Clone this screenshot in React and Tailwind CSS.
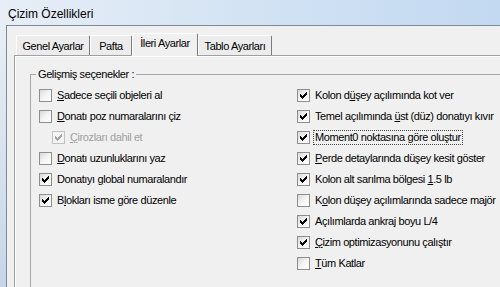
import React from "react";

const leftItems = [
  { u: "S", post: "adece seçili objeleri al", checked: false },
  { u: "D", post: "onatı poz numaralarını çiz", checked: false },
  { u: "Ç", post: "irozları dahil et", checked: true, disabled: true, indent: true },
  { u: "D", post: "onatı uzunluklarını yaz", checked: false },
  { pre: "Donatıyı ", u: "g", post: "lobal numaralandır", checked: true },
  { pre: "B", u: "l", post: "okları isme göre düzenle", checked: true },
];

const rightItems = [
  { pre: "Kolon d", u: "ü", post: "şey açılımında kot ver", checked: true },
  { pre: "Temel açılımında ", u: "ü", post: "st (düz) donatıyı kıvır", checked: true },
  { pre: "Moment0 noktasına göre oluştur", checked: true, focus: true },
  { u: "P", post: "erde detaylarında düşey kesit göster", checked: true },
  { pre: "Kolon alt sarılma bölgesi ", u: "1", post: ".5 lb", checked: true },
  { pre: "K", u: "o", post: "lon düşey açılımlarında sadece majör", checked: false },
  { pre: "Açılımlarda ankraj boyu L/4", checked: true },
  { u: "Ç", post: "izim optimizasyonunu çalıştır", checked: true },
  { u: "T", post: "üm Katlar", checked: false },
];

// classic 7x7 check mark, one column at a time
const checkCols = [2, 3, 4, 3, 2, 1, 0];

function CheckBox({ checked, disabled }) {
  return (
    <span
      className={`block h-[13px] w-[13px] shrink-0 border ${
        disabled
          ? "border-[#c2c2c2] bg-[#f3f3f3]"
          : "border-[#8e8e8e] bg-gradient-to-br from-[#d9d9d9] via-[#f4f4f4] to-white"
      }`}
    >
      {checked && (
        <svg width="11" height="11" viewBox="0 0 11 11" className="block">
          {checkCols.map((y, i) => (
            <rect key={i} x={2 + i} y={2 + y} width="1" height="3" fill={disabled ? "#a3a3a3" : "#000"} />
          ))}
        </svg>
      )}
    </span>
  );
}

function Row({ item }) {
  return (
    <div className={`flex h-[21px] items-center ${item.indent ? "pl-[13px]" : ""}`}>
      <CheckBox checked={item.checked} disabled={item.disabled} />
      <span
        className={`whitespace-nowrap leading-[13px] ${item.disabled ? "text-[#a0a0a0]" : "text-black"} ${
          item.focus ? "ml-[3px] border border-dotted border-[#444] px-px" : "ml-[5px]"
        }`}
      >
        {item.pre}
        {item.u && <u className="underline-offset-[1px]">{item.u}</u>}
        {item.post}
      </span>
    </div>
  );
}

function Tab({ label, width, selected }) {
  if (selected) {
    return (
      <div
        className={`${width} relative z-10 -mb-px flex h-[23px] shrink-0 justify-center rounded-t-[2px] border-l border-t border-r border-l-white border-t-white border-r-[#7a7a7a] bg-[#f0f0f0] pt-[3px] leading-[13px]`}
      >
        {label}
      </div>
    );
  }
  return (
    <div
      className={`${width} flex h-[20px] shrink-0 justify-center rounded-t-[2px] border-l border-t border-r border-l-white border-t-white border-r-[#7a7a7a] bg-[#ececec] pt-[4px] leading-[13px]`}
    >
      {label}
    </div>
  );
}

export default function App() {
  return (
    <div className="h-[287px] w-[500px] overflow-hidden font-['Liberation_Sans',Arial,sans-serif] text-[11px] tracking-[-0.4px] text-black">
      {/* title bar */}
      <div className="flex h-[25px] items-center bg-gradient-to-r from-[#e7eef6] via-[#d3e3f4] to-[#c2d9f1] pl-[8px] pt-[2px] text-[12px] tracking-normal">
        Çizim Özellikleri
      </div>

      <div className="flex h-[262px]">
        <div className="w-[6px] shrink-0 bg-gradient-to-b from-[#e8eef5] to-[#c6d6e8]" />
        <div className="w-[600px] shrink-0 border-l border-t border-[#7d8a99] bg-[#f0f0f0] pl-[7px] pt-[7px]">
          {/* tabs */}
          <div className="flex h-[22px] items-end pl-[2px]">
            <Tab label="Genel Ayarlar" width="w-[74px]" />
            <Tab label="Pafta" width="w-[42px]" />
            <Tab label="İleri Ayarlar" width="w-[66px]" selected />
            <Tab label="Tablo Ayarları" width="w-[74px]" />
          </div>

          {/* panel */}
          <div className="h-[240px] border-l border-t border-[#a0a0a0] bg-[#f0f0f0] shadow-[inset_1px_1px_0_#ffffff]">
            <fieldset className="ml-[15px] mt-[12px] h-[400px] w-[560px] border border-[#a7a7a7] pl-[8px] pt-[4px]">
              <legend className="-ml-[3px] px-[2px] leading-[13px]">Gelişmiş seçenekler :</legend>
              <div className="flex">
                <div className="w-[258px] shrink-0">
                  {leftItems.map((it, i) => (
                    <Row key={i} item={it} />
                  ))}
                </div>
                <div>
                  {rightItems.map((it, i) => (
                    <Row key={i} item={it} />
                  ))}
                </div>
              </div>
            </fieldset>
          </div>
        </div>
      </div>
    </div>
  );
}
